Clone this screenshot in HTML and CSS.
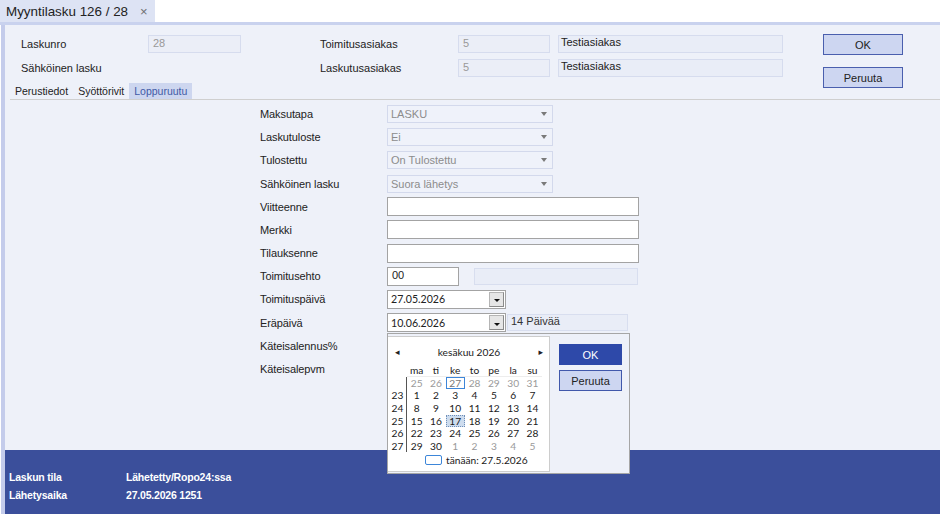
FILE: index.html
```html
<!DOCTYPE html>
<html lang="fi">
<head>
<meta charset="utf-8">
<title>Myyntilasku 126 / 28</title>
<link rel="stylesheet" href="styles.css">
</head>
<body>
<div class="tabbar">
  <div class="doc-tab"><span class="doc-title">Myyntilasku 126 / 28</span><span class="doc-close">×</span></div>
</div>
<div class="tabline"></div>
<div class="window">
  <div class="header">
    <div class="header-top">
      <div class="hfields">
        <div class="hrow">
          <span class="hlabel hl-left">Laskunro</span><span class="ro ro-num">28</span>
          <span class="hlabel hl-mid">Toimitusasiakas</span><span class="ro ro-cust">5</span><span class="namebox">Testiasiakas</span>
        </div>
        <div class="hrow">
          <span class="hlabel hl-left">Sähköinen lasku</span><span class="ro-spacer"></span>
          <span class="hlabel hl-mid">Laskutusasiakas</span><span class="ro ro-cust">5</span><span class="namebox">Testiasiakas</span>
        </div>
      </div>
      <div class="hbuttons">
        <button class="btn">OK</button>
        <button class="btn">Peruuta</button>
      </div>
    </div>
    <div class="tabs">
      <span class="tab">Perustiedot</span>
      <span class="tab">Syöttörivit</span>
      <span class="tab tab-active">Loppuruutu</span>
    </div>
  </div>

  <div class="content">
    <div class="form">
      <span class="flabel">Maksutapa</span>
      <div class="select"><span>LASKU</span><span class="sel-arrow"></span></div>
      <span class="flabel">Laskutuloste</span>
      <div class="select"><span>Ei</span><span class="sel-arrow"></span></div>
      <span class="flabel">Tulostettu</span>
      <div class="select"><span>On Tulostettu</span><span class="sel-arrow"></span></div>
      <span class="flabel">Sähköinen lasku</span>
      <div class="select"><span>Suora lähetys</span><span class="sel-arrow"></span></div>
      <span class="flabel">Viitteenne</span>
      <div class="input input-wide"></div>
      <span class="flabel">Merkki</span>
      <div class="input input-wide"></div>
      <span class="flabel">Tilauksenne</span>
      <div class="input input-wide"></div>
      <span class="flabel">Toimitusehto</span>
      <div class="fieldline">
        <div class="input input-short">00</div>
        <div class="infobox infobox-terms"></div>
      </div>
      <span class="flabel">Toimituspäivä</span>
      <div class="fieldline">
        <div class="input input-date"><span>27.05.2026</span><span class="dd-btn"><span class="dd-tri"></span></span></div>
      </div>
      <span class="flabel">Eräpäivä</span>
      <div class="fieldline anchor">
        <div class="input input-date"><span>10.06.2026</span><span class="dd-btn"><span class="dd-tri"></span></span></div>
        <div class="infobox infobox-days">14 Päivää</div>
        <div class="popup">
          <div class="calendar">
            <div class="cal-head">
              <span class="cal-arrow">◂</span>
              <span class="cal-month">kesäkuu 2026</span>
              <span class="cal-arrow">▸</span>
            </div>
            <div class="cal-grid">
              <span class="wk"></span>
              <span class="dn">ma</span><span class="dn">ti</span><span class="dn">ke</span><span class="dn">to</span><span class="dn">pe</span><span class="dn">la</span><span class="dn">su</span>

              <span class="wk wkline"></span>
              <span class="d other">25</span><span class="d other">26</span><span class="d today">27</span><span class="d other">28</span><span class="d other">29</span><span class="d other">30</span><span class="d other">31</span>

              <span class="wk wkline">23</span>
              <span class="d">1</span><span class="d">2</span><span class="d">3</span><span class="d">4</span><span class="d">5</span><span class="d">6</span><span class="d">7</span>

              <span class="wk wkline">24</span>
              <span class="d">8</span><span class="d">9</span><span class="d">10</span><span class="d">11</span><span class="d">12</span><span class="d">13</span><span class="d">14</span>

              <span class="wk wkline">25</span>
              <span class="d">15</span><span class="d">16</span><span class="d selected">17</span><span class="d">18</span><span class="d">19</span><span class="d">20</span><span class="d">21</span>

              <span class="wk wkline">26</span>
              <span class="d">22</span><span class="d">23</span><span class="d">24</span><span class="d">25</span><span class="d">26</span><span class="d">27</span><span class="d">28</span>

              <span class="wk wkline">27</span>
              <span class="d">29</span><span class="d">30</span><span class="d other">1</span><span class="d other">2</span><span class="d other">3</span><span class="d other">4</span><span class="d other">5</span>
            </div>
            <div class="cal-today"><span class="today-box"></span><span>tänään: 27.5.2026</span></div>
          </div>
          <div class="popup-buttons">
            <button class="pbtn pbtn-ok">OK</button>
            <button class="pbtn pbtn-cancel">Peruuta</button>
          </div>
        </div>
      </div>
      <span class="flabel">Käteisalennus%</span>
      <div></div>
      <span class="flabel">Käteisalepvm</span>
      <div></div>
    </div>
  </div>

  <div class="status">
    <div class="srow"><span class="slabel">Laskun tila</span><span>Lähetetty/Ropo24:ssa</span></div>
    <div class="srow"><span class="slabel">Lähetysaika</span><span>27.05.2026 1251</span></div>
  </div>
</div>
</body>
</html>
```

FILE: styles.css
```css
* { box-sizing: border-box; }

html, body {
  margin: 0;
  padding: 0;
}

body {
  width: 940px;
  height: 514px;
  overflow: hidden;
  background: #ffffff;
  font-family: "Liberation Sans", Arial, sans-serif;
  font-size: 11px;
  color: #222;
  display: flex;
  flex-direction: column;
}

/* document tab */
.tabbar {
  height: 22px;
  display: flex;
  background: #ffffff;
}
.doc-tab {
  background: #dde3f4;
  width: 155px;
  display: flex;
  align-items: center;
  padding-left: 6px;
  white-space: nowrap;
  font-family: "Liberation Sans", Arial, sans-serif;
  font-size: 13.4px;
  color: #222;
}
.doc-close {
  margin-left: 12px;
  font-size: 13px;
  color: #6f6f6f;
}
.tabline {
  height: 3px;
  background: #c9d2ee;
}

/* main window */
.window {
  flex: 1;
  display: flex;
  flex-direction: column;
  margin-left: 1px;
  border-left: 4px solid #c4cceb;
  background: #eef1f9;
}

.header {
  height: 75px;
}
.header-top {
  height: 58px;
  display: flex;
  align-items: flex-start;
  padding-top: 10px;
  padding-left: 16px;
}
.hfields {
  display: flex;
  flex-direction: column;
  gap: 6px;
}
.hrow {
  display: flex;
  align-items: center;
  height: 18px;
}
.hlabel { color: #222; }
.hl-left { width: 127px; }
.hl-mid { width: 138px; margin-left: 79px; }
.ro {
  height: 18px;
  background: #ebeef7;
  border: 1px solid #d6dcee;
  color: #999;
  padding: 1px 4px;
}
.ro-num { width: 93px; }
.ro-spacer { width: 93px; }
.ro-cust { width: 92px; }
.namebox {
  width: 225px;
  height: 18px;
  margin-left: 8px;
  background: #e9edf7;
  border: 1px solid #d6dcee;
  padding: 0 2px;
  color: #222;
}
.hbuttons {
  margin-left: 40px;
  margin-top: -1px;
  display: flex;
  flex-direction: column;
  gap: 12px;
}
.btn {
  width: 80px;
  height: 21px;
  background: #cdd6f1;
  border: 1px solid #4a5fae;
  font-family: "Liberation Sans", Arial, sans-serif;
  font-size: 11px;
  color: #222;
  padding: 0;
}

.tabs {
  height: 17px;
  margin-left: 5px;
  display: flex;
  border-bottom: 1px solid #cfcfcf;
  font-size: 10.5px;
}
.tab {
  padding: 0 5px;
  height: 16px;
  line-height: 16px;
  color: #222;
}
.tab-active {
  background: #cdd6ef;
  color: #3f5aa6;
}

/* form content */
.content {
  flex: 1;
  padding-top: 2.4px;
  padding-left: 255px;
}
.form {
  display: grid;
  grid-template-columns: 127px 260px;
  grid-auto-rows: 23.2px;
  align-items: center;
}
.flabel { color: #222; letter-spacing: -0.1px; }

.select {
  width: 166px;
  height: 18px;
  background: #eff2fa;
  border: 1px solid #d3d9ec;
  color: #8c8c8c;
  display: flex;
  align-items: center;
  justify-content: space-between;
  padding: 0 5px 0 3px;
}
.sel-arrow {
  width: 0;
  height: 0;
  border-left: 3.5px solid transparent;
  border-right: 3.5px solid transparent;
  border-top: 4px solid #7a7a7a;
}

.input {
  height: 19px;
  background: #ffffff;
  border: 1px solid #a3a3a3;
  padding: 1px 4px;
  color: #222;
  font-size: 11px;
}
.input-wide { width: 252px; }
.input-short { width: 72px; }

.fieldline {
  display: flex;
  align-items: center;
}
.anchor { position: relative; }

.infobox {
  height: 17px;
  background: #e9edf7;
  border: 1px solid #d8deef;
  padding: 0 3px;
  color: #333;
}
.infobox-terms {
  width: 164px;
  margin-left: 15px;
}
.infobox-days {
  width: 121px;
  margin-left: 1px;
}

.input-date {
  width: 119px;
  display: flex;
  align-items: center;
  justify-content: space-between;
  padding: 1px 1px 1px 3px;
  font-family: Lato, "Noto Sans", sans-serif;
  font-size: 10.6px;
}
.dd-btn {
  width: 15px;
  height: 15px;
  background: #e6e6e6;
  border: 1px solid #b5b5b5;
  border-right-color: #8a8a8a;
  border-bottom-color: #8a8a8a;
  display: flex;
  align-items: center;
  justify-content: center;
}
.dd-tri {
  width: 0;
  height: 0;
  margin-top: 3px;
  border-left: 3px solid transparent;
  border-right: 3px solid transparent;
  border-top: 3px solid #111;
}

/* calendar popup (overlay) */
.popup {
  position: absolute;
  left: 0;
  top: 20px;
  width: 243px;
  height: 141px;
  background: #eef1f9;
  border: 1px solid #a6a6a6;
  display: flex;
  align-items: flex-start;
  padding-top: 2px;
  z-index: 5;
}
.calendar {
  width: 162px;
  height: 136px;
  background: #ffffff;
  border: 1px solid #cdcdcd;
  border-left: none;
  padding: 8px 0 0 2px;
  font-family: Lato, "Noto Sans", sans-serif;
  font-size: 10.2px;
  color: #1a1a1a;
}
.cal-head {
  height: 14px;
  display: flex;
  align-items: center;
  justify-content: space-between;
  padding: 0 6px 0 5px;
}
.cal-arrow {
  font-size: 9px;
  color: #222;
  font-family: "DejaVu Sans", sans-serif;
}
.cal-month {
  font-size: 10.2px;
}
.cal-grid {
  margin-top: 5px;
  display: grid;
  grid-template-columns: 17px repeat(7, 19.3px);
  grid-auto-rows: 12.6px;
  line-height: 12.6px;
}
.wk {
  text-align: center;
  padding-right: 1px;
}
.wkline {
  border-right: 1px solid #555;
}
.dn {
  text-align: center;
  border-bottom: 1px solid #ededed;
}
.d {
  text-align: center;
}
.other { color: #9a9a9a; }
.today {
  outline: 1px solid #3d86d9;
  outline-offset: -1px;
  color: #777;
}
.selected {
  background: #cddcee;
  outline: 1px dotted #6f8fb8;
  outline-offset: -1px;
}
.cal-today {
  margin-top: 2px;
  display: flex;
  align-items: center;
  gap: 4px;
  padding-left: 35px;
}
.today-box {
  width: 17px;
  height: 10px;
  border: 1px solid #3d86d9;
  border-radius: 2px;
}

.popup-buttons {
  margin-left: 9px;
  margin-top: 8px;
  display: flex;
  flex-direction: column;
  gap: 5px;
}
.pbtn {
  width: 63px;
  height: 21px;
  font-family: "Liberation Sans", Arial, sans-serif;
  font-size: 11px;
  padding: 0;
}
.pbtn-ok {
  background: #2e49a9;
  border: 1px solid #2e49a9;
  color: #ffffff;
}
.pbtn-cancel {
  background: #cdd6f1;
  border: 1px solid #4158ab;
  color: #222;
}

/* status band */
.status {
  height: 64px;
  background: #3b4f9b;
  color: #ffffff;
  font-weight: bold;
  font-size: 10.5px;
  letter-spacing: -0.2px;
  padding: 21px 0 0 4px;
  display: flex;
  flex-direction: column;
  gap: 5px;
}
.srow {
  display: flex;
  height: 13px;
  line-height: 13px;
}
.slabel { width: 117px; }
```
